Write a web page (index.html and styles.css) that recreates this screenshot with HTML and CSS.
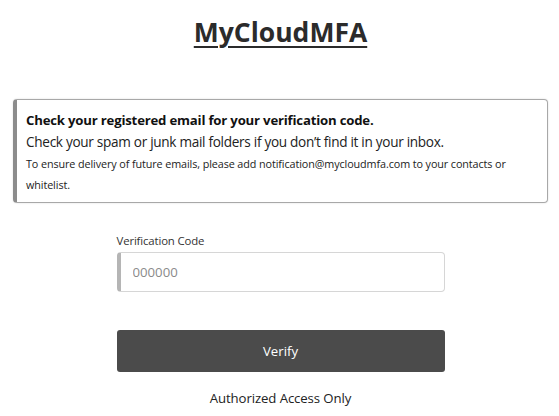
FILE: index.html
```html
<!DOCTYPE html>
<html>
<head>
<meta charset="utf-8">
<link rel="stylesheet" href="styles.css">
</head>
<body>
<div class="page">
  <h1 class="brand">MyCloudMFA</h1>
  <div class="alert">
    <div class="alert-title">Check your registered email for your verification code.</div>
    <div class="alert-line">Check your spam or junk mail folders if you don’t find it in your inbox.</div>
    <div class="alert-small">To ensure delivery of future emails, please add notification@mycloudmfa.com to your contacts or whitelist.</div>
  </div>
  <form class="form">
    <label class="label" for="code">Verification Code</label>
    <input class="input" id="code" type="text" placeholder="000000">
    <button class="btn" type="button">Verify</button>
    <div class="footer">Authorized Access Only</div>
  </form>
</div>
</body>
</html>
```
FILE: styles.css
```css
html, body {
  margin: 0;
  padding: 0;
  background: #ffffff;
}
body {
  font-family: "Open Sans", "Noto Sans", sans-serif;
  color: #222222;
}
.page {
  padding: 14px 11px 0 13px;
}
.brand {
  margin: 0;
  text-align: center;
  font-size: 26.5px;
  font-weight: 700;
  line-height: 36px;
  color: #2b2b2b;
  text-decoration: underline;
  text-decoration-thickness: 2px;
  text-underline-offset: 4px;
}
.alert {
  margin-top: 49px;
  border: 1px solid #a8a8a8;
  border-left: 4px solid #8c8c8c;
  border-radius: 4px;
  padding: 9px 10px 7px 9px;
  box-shadow: 0 0 2px rgba(0,0,0,0.15);
}
.alert-title {
  font-size: 13.2px;
  font-weight: 700;
  line-height: 22px;
  letter-spacing: -0.2px;
  color: #111;
}
.alert-line {
  font-size: 13.6px;
  line-height: 22px;
  letter-spacing: -0.3px;
  color: #222;
}
.alert-small {
  font-size: 10.8px;
  line-height: 21px;
  letter-spacing: -0.1px;
  color: #222;
}
.form {
  width: 328px;
  margin: 29px auto 0;
  display: flex;
  flex-direction: column;
}
.label {
  font-size: 11.4px;
  line-height: 18px;
  letter-spacing: -0.15px;
  color: #333;
  margin-bottom: 2px;
}
.input {
  box-sizing: border-box;
  height: 40px;
  border: 1px solid #d6d6d6;
  border-left: 4px solid #b5b5b5;
  border-radius: 4px;
  padding: 0 12px;
  font-family: inherit;
  font-size: 13.2px;
  color: #333;
  outline: none;
}
.input::placeholder {
  color: #8a8a8a;
}
.btn {
  margin-top: 38px;
  height: 42px;
  border: none;
  border-radius: 3px;
  background: #4b4b4b;
  color: #ffffff;
  font-family: inherit;
  font-size: 13.2px;
  cursor: pointer;
}
.footer {
  margin-top: 17px;
  text-align: center;
  font-size: 13.2px;
  letter-spacing: -0.1px;
  color: #222;
}
```
